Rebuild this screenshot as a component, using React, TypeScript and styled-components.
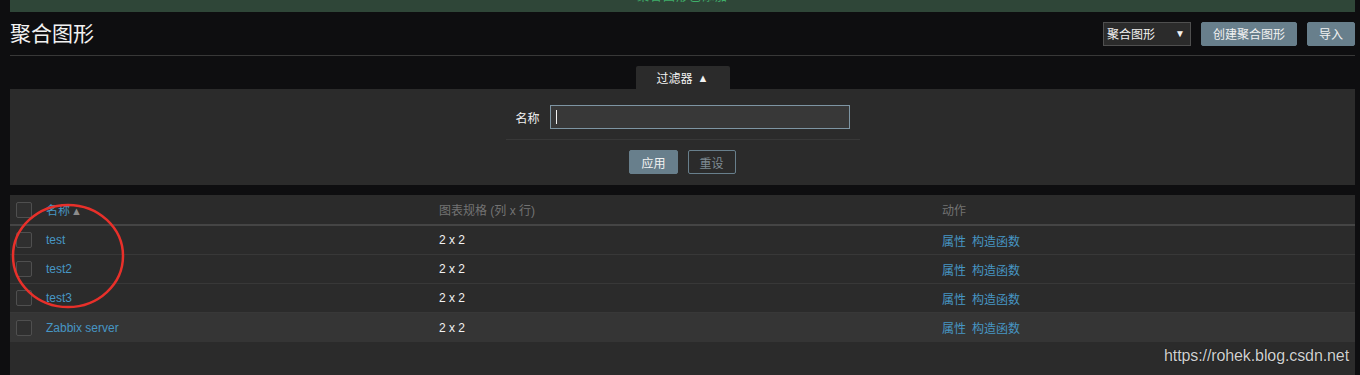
import React from "react";
import styled, { createGlobalStyle } from "styled-components";

const GlobalStyle = createGlobalStyle`
  html, body { margin: 0; padding: 0; background: #0e0e10; }
  body {
    font-family: "Liberation Sans", Arial, "Noto Sans CJK SC", sans-serif;
    font-size: 12px;
    color: #f2f2f2;
  }
  * { box-sizing: border-box; }
`;

const Page = styled.div`
  position: relative;
  width: 1360px;
  height: 375px;
  overflow: hidden;
  padding: 0 5px 0 10px;
`;

const MessageBar = styled.div`
  height: 12px;
  background: #2f4638;
  overflow: hidden;
  text-align: center;
  color: #3fae6a;
  font-size: 12px;
  line-height: 12px;
`;

const MessageText = styled.div`
  margin-top: -9px;
  letter-spacing: 1px;
`;

const Header = styled.div`
  height: 44px;
  display: flex;
  align-items: center;
  justify-content: space-between;
  border-bottom: 1px solid #383838;
`;

const Title = styled.h1`
  margin: 0;
  font-size: 21px;
  font-weight: normal;
  color: #f2f2f2;
  line-height: 24px;
`;

const Controls = styled.div`
  display: flex;
  align-items: center;
  gap: 10px;
`;

const Select = styled.div`
  width: 88px;
  height: 24px;
  border: 1px solid #4f4f4f;
  background: #2b2b2b;
  display: flex;
  align-items: center;
  justify-content: space-between;
  padding: 0 5px 0 3px;
  margin-left: 1px;
  color: #f2f2f2;
`;

const Caret = styled.span`
  font-size: 10px;
  color: #f2f2f2;
`;

const Button = styled.button<{ $outline?: boolean }>`
  height: 24px;
  padding: 0 11px;
  border-radius: 2px;
  font-family: inherit;
  font-size: 12px;
  cursor: pointer;
  border: 1px solid #687f8c;
  background: ${(p) => (p.$outline ? "transparent" : "#687f8c")};
  color: ${(p) => (p.$outline ? "#7f8c94" : "#f2f2f2")};
`;

const FilterTabRow = styled.div`
  display: flex;
  justify-content: center;
  margin-top: 10px;
`;

const FilterTab = styled.div`
  width: 94px;
  height: 23px;
  background: #2b2b2b;
  display: flex;
  align-items: center;
  justify-content: center;
  gap: 5px;
  color: #f2f2f2;
  border-radius: 2px 2px 0 0;
`;

const SmallArrow = styled.span`
  font-size: 11px;
`;

const FilterPanel = styled.div`
  background: #2b2b2b;
  height: 96px;
  padding-top: 16px;
`;

const FilterForm = styled.div`
  width: 354px;
  margin: 0 auto;
`;

const FieldRow = styled.div`
  display: flex;
  align-items: center;
  gap: 10px;
  padding-bottom: 10px;
  border-bottom: 1px solid #383838;
`;

const Label = styled.label`
  width: 34px;
  text-align: right;
  color: #f2f2f2;
`;

const Input = styled.div`
  width: 300px;
  height: 24px;
  background: #383838;
  border: 1px solid #7e95a3;
  display: flex;
  align-items: center;
  padding-left: 5px;
`;

const Cursor = styled.span`
  width: 1px;
  height: 14px;
  background: #f2f2f2;
`;

const ButtonRow = styled.div`
  display: flex;
  justify-content: center;
  gap: 10px;
  margin-top: 10px;
`;

const TableBox = styled.div`
  margin-top: 10px;
  background: #2b2b2b;
  height: 200px;
`;

const Row = styled.div<{ $head?: boolean; $hover?: boolean }>`
  display: grid;
  grid-template-columns: 36px 393px 503px 1fr;
  align-items: center;
  height: ${(p) => (p.$head ? "31px" : "29px")};
  border-bottom: ${(p) => (p.$head ? "2px solid #454545" : "1px solid #383838")};
  background: ${(p) => (p.$hover ? "#353535" : "transparent")};
  &:last-child { border-bottom: none; }
`;

const CheckCell = styled.div`
  padding-left: 6px;
  display: flex;
  align-items: center;
`;

const Checkbox = styled.span`
  width: 16px;
  height: 16px;
  border: 1px solid #4f4f4f;
  border-radius: 2px;
  background: #2f2f2f;
`;

const HeadText = styled.div`
  color: #737373;
`;

const SortLink = styled.span`
  color: #4796c4;
`;

const SortArrow = styled.span`
  color: #8c8c8c;
  font-size: 11px;
  margin-left: 1px;
`;

const Cell = styled.div`
  color: #f2f2f2;
`;

const Link = styled.a`
  color: #4796c4;
  text-decoration: none;
  & + & { margin-left: 6px; }
`;

const Watermark = styled.div`
  position: absolute;
  left: 1164px;
  top: 347px;
  font-family: "Liberation Sans", Arial, sans-serif;
  font-size: 16px;
  letter-spacing: -0.1px;
  color: #d0d0d0;
  text-shadow: 0 0 1px #000;
`;

const Annotation = styled.svg`
  position: absolute;
  left: 0;
  top: 190px;
  pointer-events: none;
`;

const rows = ["test", "test2", "test3", "Zabbix server"];

export default function App() {
  return (
    <>
      <GlobalStyle />
      <Page>
        <MessageBar>
          <MessageText>聚合图形已添加</MessageText>
        </MessageBar>
        <Header>
          <Title>聚合图形</Title>
          <Controls>
            <Select>
              <span>聚合图形</span>
              <Caret>▼</Caret>
            </Select>
            <Button>创建聚合图形</Button>
            <Button>导入</Button>
          </Controls>
        </Header>
        <FilterTabRow>
          <FilterTab>
            <span>过滤器</span>
            <SmallArrow>▲</SmallArrow>
          </FilterTab>
        </FilterTabRow>
        <FilterPanel>
          <FilterForm>
            <FieldRow>
              <Label>名称</Label>
              <Input>
                <Cursor />
              </Input>
            </FieldRow>
          </FilterForm>
          <ButtonRow>
            <Button>应用</Button>
            <Button $outline>重设</Button>
          </ButtonRow>
        </FilterPanel>
        <TableBox>
          <Row $head>
            <CheckCell>
              <Checkbox />
            </CheckCell>
            <HeadText>
              <SortLink>名称</SortLink>
              <SortArrow>▲</SortArrow>
            </HeadText>
            <HeadText>图表规格 (列 x 行)</HeadText>
            <HeadText>动作</HeadText>
          </Row>
          {rows.map((name, i) => (
            <Row key={name} $hover={i === rows.length - 1}>
              <CheckCell>
                <Checkbox />
              </CheckCell>
              <Cell>
                <Link>{name}</Link>
              </Cell>
              <Cell>2 x 2</Cell>
              <Cell>
                <Link>属性</Link>
                <Link>构造函数</Link>
              </Cell>
            </Row>
          ))}
        </TableBox>
        <Annotation width="140" height="130" viewBox="0 190 140 130">
          <ellipse cx="68" cy="256" rx="55" ry="51" fill="none" stroke="#e8302a" strokeWidth="2.5" />
        </Annotation>
        <Watermark>https://rohek.blog.csdn.net</Watermark>
      </Page>
    </>
  );
}
